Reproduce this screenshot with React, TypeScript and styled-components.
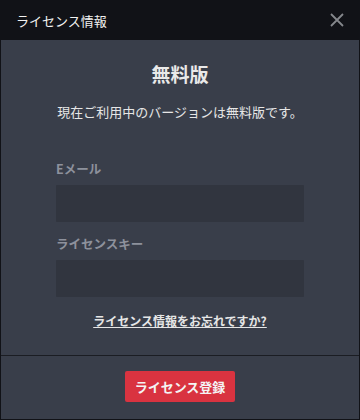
import { FC } from "react";
import styled, { createGlobalStyle } from "styled-components";

const GlobalStyle = createGlobalStyle`
  html, body {
    margin: 0;
    padding: 0;
    background: #111217;
  }
  * {
    box-sizing: border-box;
  }
`;

const App: FC = () => {
  return (
    <>
      <GlobalStyle />
      <Dialog>
        <Header>
          <HeaderTitle>ライセンス情報</HeaderTitle>
          <CloseButton aria-label="close">
            <svg width="14" height="14" viewBox="0 0 14 14">
              <path d="M1 1L13 13M13 1L1 13" stroke="#85878c" strokeWidth="1.8" />
            </svg>
          </CloseButton>
        </Header>
        <Body>
          <Content>
            <Title>無料版</Title>
            <Lead>現在ご利用中のバージョンは無料版です。</Lead>
            <Field>
              <Label>Eメール</Label>
              <Input type="text" />
            </Field>
            <Field>
              <Label>ライセンスキー</Label>
              <Input type="text" />
            </Field>
            <ForgotLink href="#">ライセンス情報をお忘れですか?</ForgotLink>
          </Content>
          <Footer>
            <PrimaryButton>ライセンス登録</PrimaryButton>
          </Footer>
        </Body>
      </Dialog>
    </>
  );
};

const Dialog = styled.div`
  width: 360px;
  height: 420px;
  display: flex;
  flex-direction: column;
  font-family: "Noto Sans CJK JP", "Noto Sans", sans-serif;
  background: #111217;
`;

const Header = styled.div`
  height: 40px;
  flex-shrink: 0;
  display: flex;
  align-items: center;
  justify-content: space-between;
  padding: 0 15px 0 16px;
`;

const HeaderTitle = styled.div`
  color: #f2f2f2;
  font-size: 13px;
  line-height: 1;
`;

const CloseButton = styled.button`
  border: none;
  background: none;
  padding: 0;
  width: 16px;
  height: 16px;
  display: flex;
  align-items: center;
  justify-content: center;
  cursor: pointer;
`;

const Body = styled.div`
  flex: 1;
  display: flex;
  flex-direction: column;
  background: #393e4a;
  margin: 0 1px 1px 1px;
`;

const Content = styled.div`
  display: flex;
  flex-direction: column;
  align-items: center;
  padding: 22px 55px 0 55px;
  height: 316px;
  border-bottom: 1px solid #1b1d23;
`;

const Title = styled.h1`
  margin: 0;
  color: #e9e9e9;
  font-size: 19px;
  font-weight: bold;
  line-height: 24px;
`;

const Lead = styled.p`
  margin: 17px 0 0 0;
  color: #e6e6e6;
  font-size: 13px;
  line-height: 18px;
  white-space: nowrap;
`;

const Field = styled.div`
  width: 100%;
  display: flex;
  flex-direction: column;
  margin-top: 40px;
  & + & {
    margin-top: 14px;
  }
`;

const Label = styled.label`
  color: #8d919c;
  font-size: 12.5px;
  font-weight: bold;
  line-height: 16px;
  margin-bottom: 8px;
`;

const Input = styled.input`
  width: 100%;
  height: 37px;
  border: none;
  outline: none;
  background: #31353f;
  border-radius: 1px;
  color: #e6e6e6;
  padding: 0 10px;
`;

const ForgotLink = styled.a`
  margin-top: 16px;
  color: #e6e6e6;
  font-size: 12px;
  font-weight: bold;
  line-height: 16px;
  text-decoration: underline;
`;

const Footer = styled.div`
  flex: 1;
  display: flex;
  align-items: flex-start;
  justify-content: center;
  padding-top: 15px;
`;

const PrimaryButton = styled.button`
  width: 110px;
  height: 31px;
  border: none;
  border-radius: 2px;
  background: #d93340;
  color: #f4f4f4;
  font-family: inherit;
  font-size: 13px;
  font-weight: bold;
  cursor: pointer;
`;

export default App;
